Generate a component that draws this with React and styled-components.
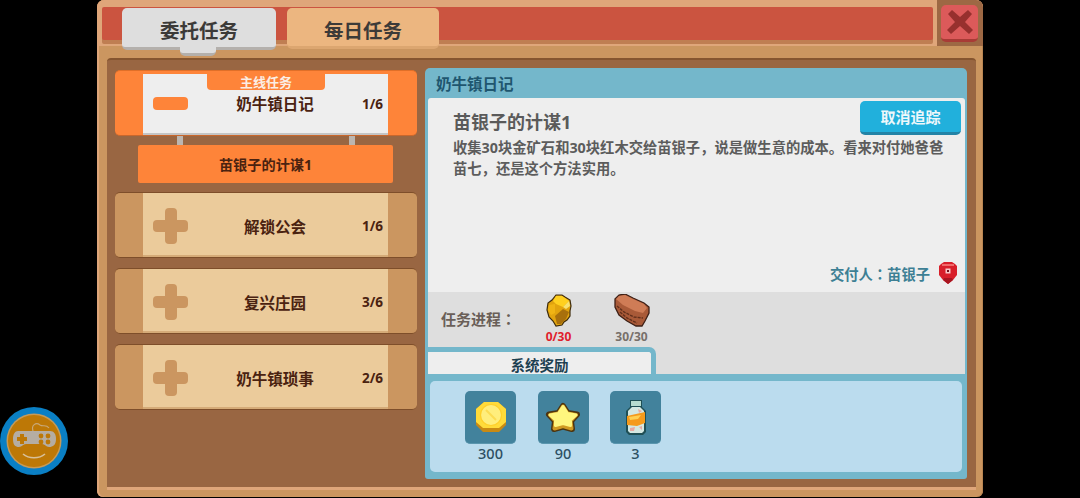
import styled, { createGlobalStyle } from "styled-components";

const GlobalStyle = createGlobalStyle`
  html, body {
    margin: 0;
    padding: 0;
    height: 100%;
    background: #000;
  }
  body {
    font-family: "Noto Sans", "Noto Sans CJK SC", sans-serif;
  }
`;

const Screen = styled.div`
  position: relative;
  width: 1080px;
  height: 498px;
  overflow: hidden;
  padding-left: 97px;
  box-sizing: border-box;
`;

const GameButton = styled.svg`
  position: absolute;
  left: 0;
  top: 407px;
  width: 68px;
  height: 68px;
`;

const Window = styled.div`
  width: 886px;
  height: 497px;
  box-sizing: border-box;
  display: flex;
  flex-direction: column;
  background: #cb9660;
  border-radius: 7px 7px 6px 6px;
  box-shadow: inset 2px 0 0 #dfa67a, inset -1px 0 0 #b98552;
  padding-bottom: 7px;
`;

const Header = styled.div`
  height: 46px;
  flex: none;
  display: flex;
  background: #dfa67a;
  border-radius: 7px 7px 0 0;
  padding-left: 5px;
`;

const TitleBar = styled.div`
  flex: 1;
  height: 33px;
  margin-top: 7px;
  display: flex;
  align-items: flex-start;
  gap: 11px;
  padding-left: 20px;
  background: #cb5440;
  border-radius: 2px;
  box-shadow: 0 4px 0 #bf7e52;
`;

const Tab = styled.div`
  position: relative;
  z-index: 2;
  flex: none;
  box-sizing: border-box;
  margin-top: 1px;
  display: flex;
  align-items: center;
  justify-content: center;
  width: ${(p) => (p.$active ? 154 : 152)}px;
  height: ${(p) => (p.$active ? 42 : 41)}px;
  padding-top: 4px;
  font-size: 19.5px;
  font-weight: 700;
  color: #3c3a38;
  background: ${(p) => (p.$active ? "#dedede" : "#ecb680")};
  border-bottom: 3px solid ${(p) => (p.$active ? "#b4b0ac" : "#dca670")};
  border-radius: 5px;

  ${(p) =>
    p.$active
      ? `&::after {
          content: "";
          position: absolute;
          left: 58px;
          bottom: -9px;
          width: 36px;
          height: 6px;
          background: #dedede;
          border-bottom: 3px solid #b4b0ac;
          border-radius: 0 0 5px 5px;
        }`
      : ""}
`;

const CloseBox = styled.div`
  flex: none;
  width: 46px;
  height: 46px;
  margin-left: 4px;
  box-sizing: border-box;
  padding: 5px 5px 0 4px;
  background: #9d6844;
  border-radius: 0 7px 0 0;
`;

const CloseButton = styled.div`
  width: 37px;
  height: 37px;
  box-sizing: border-box;
  display: flex;
  align-items: center;
  justify-content: center;
  padding-bottom: 1px;
  background: #dc5a5a;
  border-bottom: 3px solid #a83b36;
  border-radius: 5px;
`;

const Body = styled.div`
  flex: 1;
  min-height: 0;
  margin: 12px 7px 0 10px;
  display: flex;
  gap: 8px;
  padding: 8px 9px 8px 8px;
  background: #996642;
  border-top: 2px solid #85552f;
  border-bottom: 3px solid #dfa67a;
  border-radius: 4px 4px 0 0;
`;

const LeftColumn = styled.div`
  width: 302px;
  flex: none;
  display: flex;
  flex-direction: column;
  padding-top: 2px;
`;

const QuestList = styled.div`
  display: flex;
  flex-direction: column;
  gap: 10px;
  margin-top: 9px;
`;

const QuestItem = styled.div`
  position: relative;
  box-sizing: border-box;
  height: 66px;
  flex: none;
  display: flex;
  padding: ${(p) => (p.$active ? "3px" : "0")} 29px 0 28px;
  background: ${(p) => (p.$active ? "#fe8439" : "#cb9660")};
  border-top: 1px solid ${(p) => (p.$active ? "#e06f28" : "#7e4e2a")};
  border-bottom: 1px solid ${(p) => (p.$active ? "#c9672c" : "#7e4e2a")};
  border-radius: 5px;
`;

const QuestInner = styled.div`
  flex: 1;
  display: flex;
  align-items: center;
  padding: ${(p) => (p.$active ? "0" : "4px")} 4px 0 10px;
  background: ${(p) => (p.$active ? "#eeeeee" : "#ebcb9b")};
  border-bottom: 2px solid ${(p) => (p.$active ? "#c4c4c4" : "#d5ab78")};
`;

const QuestFlag = styled.div`
  position: absolute;
  top: 3px;
  left: 92px;
  width: 118px;
  height: 14px;
  padding-bottom: 2px;
  display: flex;
  align-items: center;
  justify-content: center;
  font-size: 13px;
  font-weight: 700;
  color: #fbeee4;
  background: #fe8439;
  border-radius: 0 0 4px 4px;
`;

const Minus = styled.div`
  flex: none;
  width: 35px;
  height: 13px;
  background: #fe8439;
  border-radius: 4px;
`;

const Plus = styled.div`
  position: relative;
  flex: none;
  width: 35px;
  height: 12px;
  background: #cb9660;
  border-radius: 4px;

  &::after {
    content: "";
    position: absolute;
    left: 12px;
    top: -12px;
    width: 12px;
    height: 36px;
    background: #cb9660;
    border-radius: 4px;
  }
`;

const QuestName = styled.div`
  flex: 1;
  text-align: center;
  font-size: 15.5px;
  font-weight: 700;
  color: #4a2210;
`;

const QuestCount = styled.div`
  flex: none;
  width: 22px;
  font-size: 13.5px;
  font-weight: 700;
  white-space: nowrap;
  color: #4a2210;
`;

const Pegs = styled.div`
  height: 9px;
  flex: none;
  display: flex;
  justify-content: space-between;
  padding: 0 62px;
`;

const Peg = styled.div`
  width: 6px;
  background: #bcb6b0;
`;

const SubQuest = styled.div`
  margin: 0 24px 0 23px;
  height: 38px;
  flex: none;
  display: flex;
  align-items: center;
  justify-content: center;
  font-size: 14.2px;
  font-weight: 700;
  color: #4a2210;
  background: #fe8439;
  border-radius: 2px;
`;

const DetailPanel = styled.div`
  flex: 1;
  min-width: 0;
  display: flex;
  flex-direction: column;
  padding: 0 2px 7px 3px;
  background: #74b7cb;
  border-radius: 5px 5px 3px 3px;
`;

const PanelTitle = styled.div`
  height: 30px;
  flex: none;
  display: flex;
  align-items: center;
  padding-left: 8px;
  font-size: 15.5px;
  font-weight: 700;
  color: #1f566f;
`;

const Description = styled.div`
  flex: 1;
  min-height: 0;
  display: flex;
  flex-direction: column;
  padding: 3px 4px 8px 25px;
  background: #eeeeee;
  border-radius: 3px 3px 0 0;
`;

const DescriptionHead = styled.div`
  height: 34px;
  flex: none;
  display: flex;
  justify-content: space-between;
`;

const QuestTitle = styled.div`
  padding-top: 9px;
  font-size: 18px;
  line-height: 24px;
  font-weight: 700;
  color: #5a5a5a;
`;

const TrackButton = styled.div`
  width: 101px;
  height: 34px;
  box-sizing: border-box;
  display: flex;
  align-items: center;
  justify-content: center;
  font-size: 15px;
  font-weight: 700;
  color: #eef8fb;
  background: #21b0dc;
  border-bottom: 3px solid #2383a6;
  border-radius: 5px;
`;

const QuestText = styled.div`
  margin-top: 2px;
  padding-right: 13px;
  font-size: 14.3px;
  line-height: 21px;
  font-weight: 700;
  color: #5c5c5c;
`;

const GiverRow = styled.div`
  margin-top: auto;
  display: flex;
  align-items: center;
  justify-content: flex-end;
  gap: 9px;
  padding-right: 4px;
  font-family: "Noto Sans CJK TC", sans-serif;
  font-size: 14.3px;
  font-weight: 700;
  color: #3d7f94;
`;

const ProgressArea = styled.div`
  height: 82px;
  flex: none;
  display: flex;
  flex-direction: column;
  background: #dedede;
`;

const ProgressRow = styled.div`
  height: 55px;
  flex: none;
  display: flex;
  align-items: flex-start;
  padding-left: 13px;
`;

const ProgressLabel = styled.div`
  width: 81px;
  padding-top: 16px;
  font-family: "Noto Sans CJK TC", sans-serif;
  font-size: 15px;
  line-height: 22px;
  font-weight: 700;
  white-space: nowrap;
  color: #6a5f58;
`;

const ProgressItem = styled.div`
  width: 73px;
  display: flex;
  flex-direction: column;
  align-items: center;
  padding-top: 2px;
`;

const ProgressIcon = styled.svg`
  display: block;
  width: ${(p) => p.$w}px;
  height: 33px;
`;

const ProgressCount = styled.div`
  margin-top: 3px;
  font-size: 12px;
  line-height: 14px;
  font-weight: 700;
  color: ${(p) => (p.$short ? "#e0202c" : "#77706a")};
`;

const RewardTab = styled.div`
  width: 223px;
  height: 19px;
  padding-top: 3px;
  display: flex;
  align-items: center;
  justify-content: center;
  font-size: 14.5px;
  font-weight: 700;
  color: #1d4050;
  background: #eeeeee;
  border: solid #74b7cb;
  border-width: 5px 5px 0 0;
  border-radius: 0 7px 0 0;
`;

const RewardArea = styled.div`
  height: 81px;
  flex: none;
  display: flex;
  gap: 21.5px;
  margin: 7px 3px 0 2px;
  padding: 10px 0 0 35px;
  background: #bbdcee;
  border-radius: 5px;
`;

const Reward = styled.div`
  width: 51px;
  display: flex;
  flex-direction: column;
  align-items: center;
`;

const RewardTile = styled.div`
  width: 51px;
  height: 52px;
  flex: none;
  display: flex;
  align-items: center;
  justify-content: center;
  background: #42829c;
  border-bottom: 1px solid #5a96ae;
  border-radius: 5px;
`;

const RewardCount = styled.div`
  font-size: 14.5px;
  line-height: 18px;
  font-weight: 500;
  color: #2c4f62;
`;

const quests = [
  { name: "解锁公会", count: "1/6" },
  { name: "复兴庄园", count: "3/6" },
  { name: "奶牛镇琐事", count: "2/6" },
];

const rewards = [
  { id: "coin", count: "300" },
  { id: "star", count: "90" },
  { id: "bottle", count: "3" },
];

function CloseIcon() {
  return (
    <svg width="26" height="24" viewBox="0 0 26 24">
      <path
        d="M1 4 L5 0 L13 7 L21 0 L25 4 L18 12 L26 20 L22 24 L13 16 L4 24 L0 20 L8 12 Z"
        fill="#97302e"
      />
    </svg>
  );
}

function OreIcon() {
  return (
    <ProgressIcon $w={26} viewBox="0 0 26 33">
      <path
        d="M10 1 L16 1 L19 3 L24 6 L25 12 L24 17 L24 22 L21 26 L18 28 L16 31 L10 32 L7 27 L3 23 L1 16 L2 9 L6 6 Z"
        fill="#e2a40e"
        stroke="#3e2c0c"
        strokeWidth="1.2"
      />
      <path d="M10 2 L16 2 L19 4 L23 7 L17 13 L10 10 L7 7 Z" fill="#ffd01f" />
      <path d="M3 11 L9 10 L9 19 L5 21 L2 16 Z" fill="#f0b414" />
      <path d="M9 22 L17 15 L23 18 L20 25 L15 30 L11 30 Z" fill="#a8700c" />
      <path d="M17 13 L23 7 L24 12 L20 15 Z" fill="#f7e272" />
    </ProgressIcon>
  );
}

function LogIcon() {
  return (
    <ProgressIcon $w={36} viewBox="0 0 36 33">
      <path
        d="M1 5 L5 1 L11 0 L19 4 L30 9 L35 13 L35 19 L31 27 L28 32 L22 32 L13 27 L5 21 L1 13 Z"
        fill="#a95a38"
        stroke="#3e2016"
        strokeWidth="1.3"
      />
      <path d="M2 5 L5 2 L11 1 L19 5 L30 10 L33 14 L29 19 L21 17 L9 11 Z" fill="#cf7c56" />
      <path
        d="M3 12 L10 18 L20 23 L29 24 M6 18 L13 24 L23 29"
        fill="none"
        stroke="#62301c"
        strokeWidth="1.4"
        strokeDasharray="3 1"
      />
    </ProgressIcon>
  );
}

function CoinIcon() {
  return (
    <svg width="32" height="32" viewBox="0 0 32 32">
      <path d="M9 1 H23 L31 8 V24 L24 31 H8 L1 24 V8 Z" fill="#c88a14" />
      <path d="M9 1 H23 L31 8 V21 L24 27 H8 L1 21 V8 Z" fill="#ffdb3a" />
      <circle cx="16" cy="14" r="10.5" fill="#ffee7c" stroke="#ffd02a" strokeWidth="1.2" />
      <path d="M11 9 L21 19" stroke="#fcdc52" strokeWidth="2" />
    </svg>
  );
}

function StarIcon() {
  return (
    <svg width="36" height="31" viewBox="0 0 36 31">
      <path
        d="M18 4 L22.5 11 L32 12.5 L26 19 L27 27 L18 24.5 L9 27 L10 19 L4 12.5 L13.5 11 Z"
        fill="#4c3410"
        stroke="#4c3410"
        strokeWidth="6"
        strokeLinejoin="round"
      />
      <path
        d="M18 4.5 L22.5 11.5 L31 13 L25.5 19 L26.5 26.5 L18 24 L9.5 26.5 L10.5 19 L5 13 L13.5 11.5 Z"
        fill="#d09a22"
        stroke="#d09a22"
        strokeWidth="4"
        strokeLinejoin="round"
      />
      <path
        d="M18 4.5 L22.5 11.5 L31 13 L25.5 18 L25.5 23.5 L18 21.5 L10.5 23.5 L10.5 18 L5 13 L13.5 11.5 Z"
        fill="#fff67e"
        stroke="#fff67e"
        strokeWidth="3"
        strokeLinejoin="round"
      />
    </svg>
  );
}

function BottleIcon() {
  return (
    <svg width="22" height="35" viewBox="0 0 22 35">
      <path d="M5 0 H17 V7 L21 11 V32 L18 35 H4 L1 32 V11 L5 7 Z" fill="#1f4f55" />
      <path d="M6 1 H16 V6 H6 Z" fill="#b6dcd0" />
      <path d="M3 11 L7 7 H15 L19 11 V31 L17 33 H5 L3 31 Z" fill="#d4e8e2" />
      <path d="M2 16 L20 12 V23 L12 26 L2 25 Z" fill="#f59a1c" />
      <path d="M4 17 L16 15 L13 19 L5 20 Z" fill="#ffd052" />
      <path d="M5 28 L10 27 L9 31 L5 31 Z M13 9 L17 11 L14 13 Z M14 27 L17 26 L17 30 Z" fill="#e8a8a0" />
    </svg>
  );
}

function ShieldIcon() {
  return (
    <svg width="18" height="22" viewBox="0 0 18 22">
      <path d="M2 2 L5 0 H13 L16 2 L18 4 V13 L14 18 L9 22 L4 18 L0 13 V4 Z" fill="#d81f2a" />
      <path d="M3 2 H15 V4 H3 Z" fill="#f06a6a" />
      <path d="M4 18 L9 22 L14 18 L13 16 H5 Z" fill="#a81520" />
      <rect x="6.5" y="6.5" width="5" height="5" fill="#f8c8c8" />
      <rect x="8" y="8" width="2" height="2" fill="#701018" />
    </svg>
  );
}

function RewardIcon({ id }) {
  if (id === "coin") return <CoinIcon />;
  if (id === "star") return <StarIcon />;
  return <BottleIcon />;
}

function App() {
  return (
    <>
      <GlobalStyle />
      <Screen>
        <GameButton viewBox="0 0 68 68">
          <circle cx="34" cy="34" r="34" fill="#0a7fc4" />
          <circle cx="34" cy="34" r="27.5" fill="#c59a58" />
          <circle cx="34" cy="34" r="26" fill="#bd7806" />
          <path
            d="M33 24 C31 18 36 15 40 18 C43 20 46 17 49 21"
            fill="none"
            stroke="#c8a878"
            strokeWidth="1.2"
          />
          <path
            d="M18 24 H50 C54 24 56 27 56 32 C56 38 53 40 49 40 C46 40 45 37 42 37 H26 C23 37 22 40 19 40 C15 40 13 38 13 32 C13 27 15 24 18 24 Z"
            fill="#b5ada2"
          />
          <path d="M20 27 H24 V30 H27 V34 H24 V37 H20 V34 H17 V30 H20 Z" fill="#bd7806" />
          <circle cx="41" cy="29" r="2.4" fill="#bd7806" />
          <circle cx="48" cy="29" r="2.4" fill="#bd7806" />
          <circle cx="41" cy="35" r="2.4" fill="#bd7806" />
          <circle cx="48" cy="35" r="2.4" fill="#bd7806" />
          <path
            d="M23 47 C29 52 39 52 45 47"
            fill="none"
            stroke="#d8c09a"
            strokeWidth="1.6"
          />
        </GameButton>
        <Window>
          <Header>
            <TitleBar>
              <Tab $active>委托任务</Tab>
              <Tab>每日任务</Tab>
            </TitleBar>
            <CloseBox>
              <CloseButton>
                <CloseIcon />
              </CloseButton>
            </CloseBox>
          </Header>
          <Body>
            <LeftColumn>
              <QuestItem $active>
                <QuestFlag>主线任务</QuestFlag>
                <QuestInner $active>
                  <Minus />
                  <QuestName>奶牛镇日记</QuestName>
                  <QuestCount>1/6</QuestCount>
                </QuestInner>
              </QuestItem>
              <Pegs>
                <Peg />
                <Peg />
              </Pegs>
              <SubQuest>苗银子的计谋1</SubQuest>
              <QuestList>
                {quests.map((q) => (
                  <QuestItem key={q.name}>
                    <QuestInner>
                      <Plus />
                      <QuestName>{q.name}</QuestName>
                      <QuestCount>{q.count}</QuestCount>
                    </QuestInner>
                  </QuestItem>
                ))}
              </QuestList>
            </LeftColumn>
            <DetailPanel>
              <PanelTitle>奶牛镇日记</PanelTitle>
              <Description>
                <DescriptionHead>
                  <QuestTitle>苗银子的计谋1</QuestTitle>
                  <TrackButton>取消追踪</TrackButton>
                </DescriptionHead>
                <QuestText>
                  收集30块金矿石和30块红木交给苗银子，说是做生意的成本。看来对付她爸爸苗七，还是这个方法实用。
                </QuestText>
                <GiverRow>
                  交付人：苗银子
                  <ShieldIcon />
                </GiverRow>
              </Description>
              <ProgressArea>
                <ProgressRow>
                  <ProgressLabel>任务进程：</ProgressLabel>
                  <ProgressItem>
                    <OreIcon />
                    <ProgressCount $short>0/30</ProgressCount>
                  </ProgressItem>
                  <ProgressItem>
                    <LogIcon />
                    <ProgressCount>30/30</ProgressCount>
                  </ProgressItem>
                </ProgressRow>
                <RewardTab>系统奖励</RewardTab>
              </ProgressArea>
              <RewardArea>
                {rewards.map((r) => (
                  <Reward key={r.id}>
                    <RewardTile>
                      <RewardIcon id={r.id} />
                    </RewardTile>
                    <RewardCount>{r.count}</RewardCount>
                  </Reward>
                ))}
              </RewardArea>
            </DetailPanel>
          </Body>
        </Window>
      </Screen>
    </>
  );
}

export default App;
